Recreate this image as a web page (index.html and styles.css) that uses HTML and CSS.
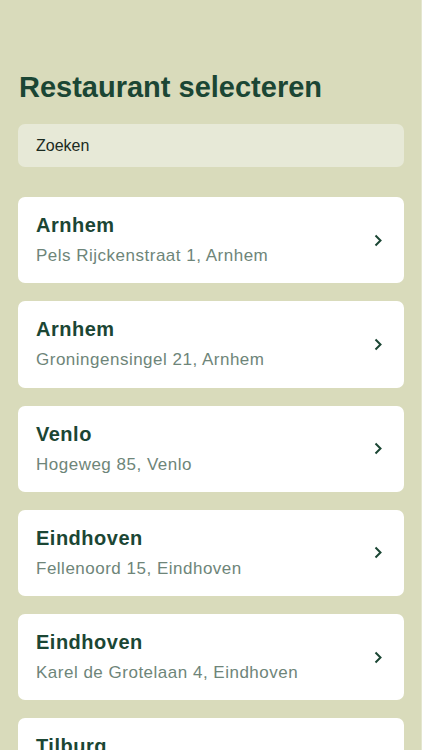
FILE: index.html
```html
<!DOCTYPE html>
<html lang="nl">
<head>
  <meta charset="UTF-8" />
  <meta name="viewport" content="width=device-width, initial-scale=1.0"/>
  <title>Restaurant selecteren</title>
  <link rel="stylesheet" href="styles.css">
</head>
<body>
  <div class="select-page">
    <h1>Restaurant selecteren</h1>
    <div class="search">
      <input type="text" placeholder="Zoeken">
    </div>
    <ul class="restaurant-list">
      <li class="restaurant">
        <div class="info">
          <span class="name">Arnhem</span>
          <span class="address">Pels Rijckenstraat 1, Arnhem</span>
        </div>
        <svg class="chevron" viewBox="0 0 8 13"><path d="M1.5 1.5l5 5-5 5"/></svg>
      </li>
      <li class="restaurant">
        <div class="info">
          <span class="name">Arnhem</span>
          <span class="address">Groningensingel 21, Arnhem</span>
        </div>
        <svg class="chevron" viewBox="0 0 8 13"><path d="M1.5 1.5l5 5-5 5"/></svg>
      </li>
      <li class="restaurant">
        <div class="info">
          <span class="name">Venlo</span>
          <span class="address">Hogeweg 85, Venlo</span>
        </div>
        <svg class="chevron" viewBox="0 0 8 13"><path d="M1.5 1.5l5 5-5 5"/></svg>
      </li>
      <li class="restaurant">
        <div class="info">
          <span class="name">Eindhoven</span>
          <span class="address">Fellenoord 15, Eindhoven</span>
        </div>
        <svg class="chevron" viewBox="0 0 8 13"><path d="M1.5 1.5l5 5-5 5"/></svg>
      </li>
      <li class="restaurant">
        <div class="info">
          <span class="name">Eindhoven</span>
          <span class="address">Karel de Grotelaan 4, Eindhoven</span>
        </div>
        <svg class="chevron" viewBox="0 0 8 13"><path d="M1.5 1.5l5 5-5 5"/></svg>
      </li>
      <li class="restaurant">
        <div class="info">
          <span class="name">Tilburg</span>
          <span class="address">Heuvel 1, Tilburg</span>
        </div>
        <svg class="chevron" viewBox="0 0 8 13"><path d="M1.5 1.5l5 5-5 5"/></svg>
      </li>
    </ul>
  </div>
</body>
</html>
```
FILE: styles.css
```css
body {
  font-family: 'Liberation Sans', Arial, sans-serif;
  background-color: #D9DBBB;
  margin: 0;
  padding: 0;
  height: 750px;
  overflow: hidden;
  box-shadow: inset -1px 0 #E4E6CF;
}
.select-page {
  padding: 70px 18px 0;
}
h1 {
  margin: 0 0 20px 1px;
  font-size: 29px;
  font-weight: bold;
  line-height: 34px;
  color: #1B4634;
}
.search input {
  width: 100%;
  height: 43px;
  padding: 0 18px;
  border: none;
  border-radius: 7px;
  background-color: #E7E9D7;
  font-family: inherit;
  font-size: 16px;
  color: #1B2B22;
  box-sizing: border-box;
  outline: none;
}
.search input::placeholder {
  color: #1B2B22;
}
.restaurant-list {
  list-style: none;
  margin: 30px 0 0;
  padding: 0;
  display: flex;
  flex-direction: column;
  gap: 18px;
}
.restaurant {
  display: flex;
  align-items: center;
  justify-content: space-between;
  height: 86.25px;
  padding: 0 22px 0 18px;
  background-color: #FFFFFF;
  border-radius: 7px;
  box-sizing: border-box;
}
.info {
  display: flex;
  flex-direction: column;
  gap: 9px;
}
.name {
  font-size: 20px;
  font-weight: bold;
  letter-spacing: 0.5px;
  color: #1B4634;
}
.address {
  font-size: 17px;
  letter-spacing: 0.5px;
  color: #6E8579;
}
.chevron {
  width: 8px;
  height: 13px;
  fill: none;
  stroke: #1B4634;
  stroke-width: 2;
}
```
